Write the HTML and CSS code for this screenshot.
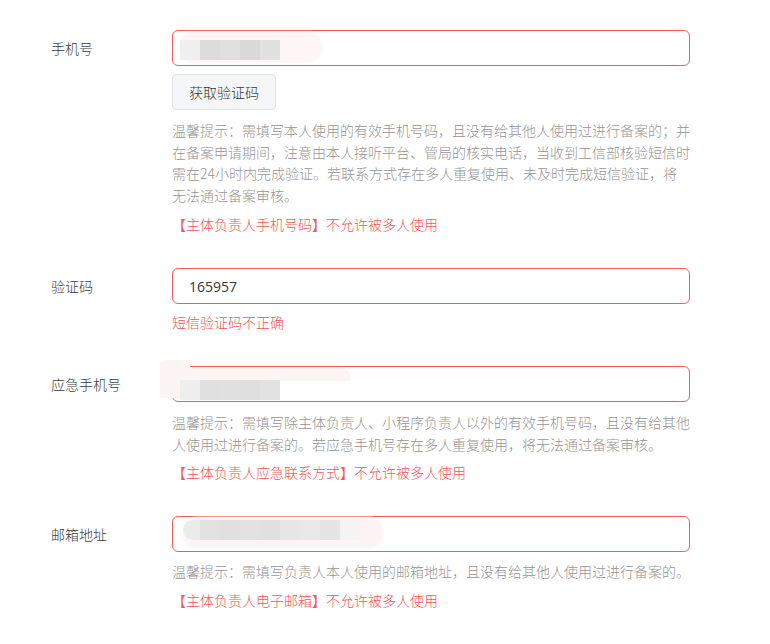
FILE: index.html
```html
<!DOCTYPE html>
<html lang="zh-CN">
<head>
<meta charset="utf-8">
<title>备案信息</title>
<link rel="stylesheet" href="styles.css">
</head>
<body>
<form class="form">
  <div class="row">
    <label class="label">手机号</label>
    <div class="field">
      <div class="input">
        <div class="mask mask-phone">
          <span class="halo"></span>
          <span class="px p1"></span><span class="px p2"></span><span class="px p3"></span><span class="px p4"></span><span class="px p5"></span>
        </div>
      </div>
      <button type="button" class="btn">获取验证码</button>
      <p class="hint hint-first">温馨提示：需填写本人使用的有效手机号码，且没有给其他人使用过进行备案的；并在备案申请期间，注意由本人接听平台、管局的核实电话，当收到工信部核验短信时需在24小时内完成验证。若联系方式存在多人重复使用、未及时完成短信验证，将无法通过备案审核。</p>
      <p class="warn">【主体负责人手机号码】不允许被多人使用</p>
    </div>
  </div>

  <div class="row">
    <label class="label">验证码</label>
    <div class="field">
      <div class="input"><span class="value">165957</span></div>
      <p class="warn warn-tight">短信验证码不正确</p>
    </div>
  </div>

  <div class="row">
    <label class="label">应急手机号</label>
    <div class="field">
      <div class="input">
        <div class="mask mask-emerg">
          <span class="side"></span>
          <span class="band"></span>
          <span class="px p1"></span><span class="px p2"></span><span class="px p3"></span><span class="px p4"></span><span class="px p5"></span>
        </div>
      </div>
      <p class="hint hint-mid">温馨提示：需填写除主体负责人、小程序负责人以外的有效手机号码，且没有给其他人使用过进行备案的。若应急手机号存在多人重复使用，将无法通过备案审核。</p>
      <p class="warn warn-close">【主体负责人应急联系方式】不允许被多人使用</p>
    </div>
  </div>

  <div class="row">
    <label class="label">邮箱地址</label>
    <div class="field">
      <div class="input">
        <div class="mask mask-mail">
          <span class="halo"></span>
          <span class="px p1"></span><span class="px p2"></span><span class="px p3"></span><span class="px p4"></span><span class="px p5"></span><span class="px p6"></span><span class="px p7"></span><span class="px p8"></span><span class="px p9"></span>
        </div>
      </div>
      <p class="hint">温馨提示：需填写负责人本人使用的邮箱地址，且没有给其他人使用过进行备案的。</p>
      <p class="warn">【主体负责人电子邮箱】不允许被多人使用</p>
    </div>
  </div>
</form>
</body>
</html>
```

FILE: styles.css
```css
html, body {
  margin: 0;
  padding: 0;
  background: #ffffff;
}

body {
  font-family: "Microsoft YaHei", "Noto Sans CJK SC", "Noto Sans", sans-serif;
  font-size: 14px;
  font-weight: 300;
  color: #404040;
}

.form {
  padding: 30px 0 0 51px;
  display: flex;
  flex-direction: column;
  gap: 33px;
}

.row {
  display: flex;
  align-items: flex-start;
}

.label {
  width: 121px;
  flex: none;
  line-height: 36px;
  color: #3a3a3a;
}

.field {
  width: 518px;
  display: flex;
  flex-direction: column;
  align-items: flex-start;
}

.input {
  position: relative;
  box-sizing: border-box;
  width: 518px;
  height: 36px;
  border: 1px solid #f65a5a;
  border-radius: 6px;
  display: flex;
  align-items: center;
  padding: 0 16px;
  background: #fff;
}

.value {
  font-family: "Open Sans", "Noto Sans", sans-serif;
  font-size: 14px;
  font-weight: 400;
  color: #353535;
}

.btn {
  margin-top: 8px;
  box-sizing: border-box;
  height: 36px;
  width: 104px;
  padding: 0;
  border: 1px solid #e2e3e6;
  border-radius: 4px;
  background: #f5f6f8;
  font-family: inherit;
  font-size: 14px;
  font-weight: 300;
  color: #353535;
}

.hint {
  margin: 9px 0 0;
  line-height: 21.6px;
  color: #959595;
}

.hint-first {
  margin-top: 10px;
}

.hint-mid {
  margin-top: 10px;
}

.warn {
  margin: 7px 0 0;
  line-height: 22px;
  color: #f65555;
}

.warn-tight {
  margin-top: 7px;
}

.warn-close {
  margin-top: 5px;
}

/* privacy blur masks lying over the inputs */
.mask {
  position: absolute;
  pointer-events: none;
}

.halo {
  position: absolute;
  inset: 0;
  border-radius: 15px;
  background: #fdf4f4;
  filter: blur(1px);
}

.px {
  position: absolute;
  width: 20px;
  height: 20px;
  filter: blur(0.4px);
}

.mask-phone {
  left: 5px;
  top: 1px;
  width: 145px;
  height: 31px;
}
.mask-phone .halo { background: #fef6f6; }
.mask-phone .px { top: 8px; }
.mask-phone .p1 { left: 2px; background: #efefef; }
.mask-phone .p2 { left: 22px; background: #dcdcdc; }
.mask-phone .p3 { left: 42px; background: #e0e0e0; }
.mask-phone .p4 { left: 62px; background: #d9d9d9; }
.mask-phone .p5 { left: 82px; background: #e1e1e1; }

.mask-emerg {
  left: -13px;
  top: -7px;
  width: 190px;
  height: 44px;
}
.mask-emerg .side {
  position: absolute;
  left: 0;
  top: 0;
  width: 30px;
  height: 38px;
  background: #fdf4f4;
  border-top-left-radius: 10px 4px;
}
.mask-emerg .band {
  position: absolute;
  left: 30px;
  top: 7px;
  width: 160px;
  height: 14px;
  background: #fdf4f4;
  border-radius: 0 10px 0 0;
}
.mask-emerg .px { top: 20px; }
.mask-emerg .p1 { left: 20px; background: #eeeeee; }
.mask-emerg .p2 { left: 40px; background: #e0e0e0; }
.mask-emerg .p3 { left: 60px; background: #e1e1e1; }
.mask-emerg .p4 { left: 80px; background: #dfdfdf; }
.mask-emerg .p5 { left: 100px; background: #e2e2e2; }

.mask-mail {
  left: 10px;
  top: 0;
  width: 200px;
  height: 32px;
}
.mask-mail .halo { background: #fdf5f5; border-radius: 14px; }
.mask-mail .px { top: 3px; }
.mask-mail .p1 { left: 0px; background: #ececec; border-radius: 10px 0 0 10px; }
.mask-mail .p2 { left: 17px; background: #e2e2e2; }
.mask-mail .p3 { left: 37px; background: #e0e0e0; }
.mask-mail .p4 { left: 57px; background: #e2e2e2; }
.mask-mail .p5 { left: 77px; background: #e1e1e1; }
.mask-mail .p6 { left: 97px; background: #e6e6e6; }
.mask-mail .p7 { left: 117px; background: #e8e8e8; }
.mask-mail .p8 { left: 137px; background: #e5e5e5; }
.mask-mail .p9 { left: 157px; background: #f4f4f4; }
```
